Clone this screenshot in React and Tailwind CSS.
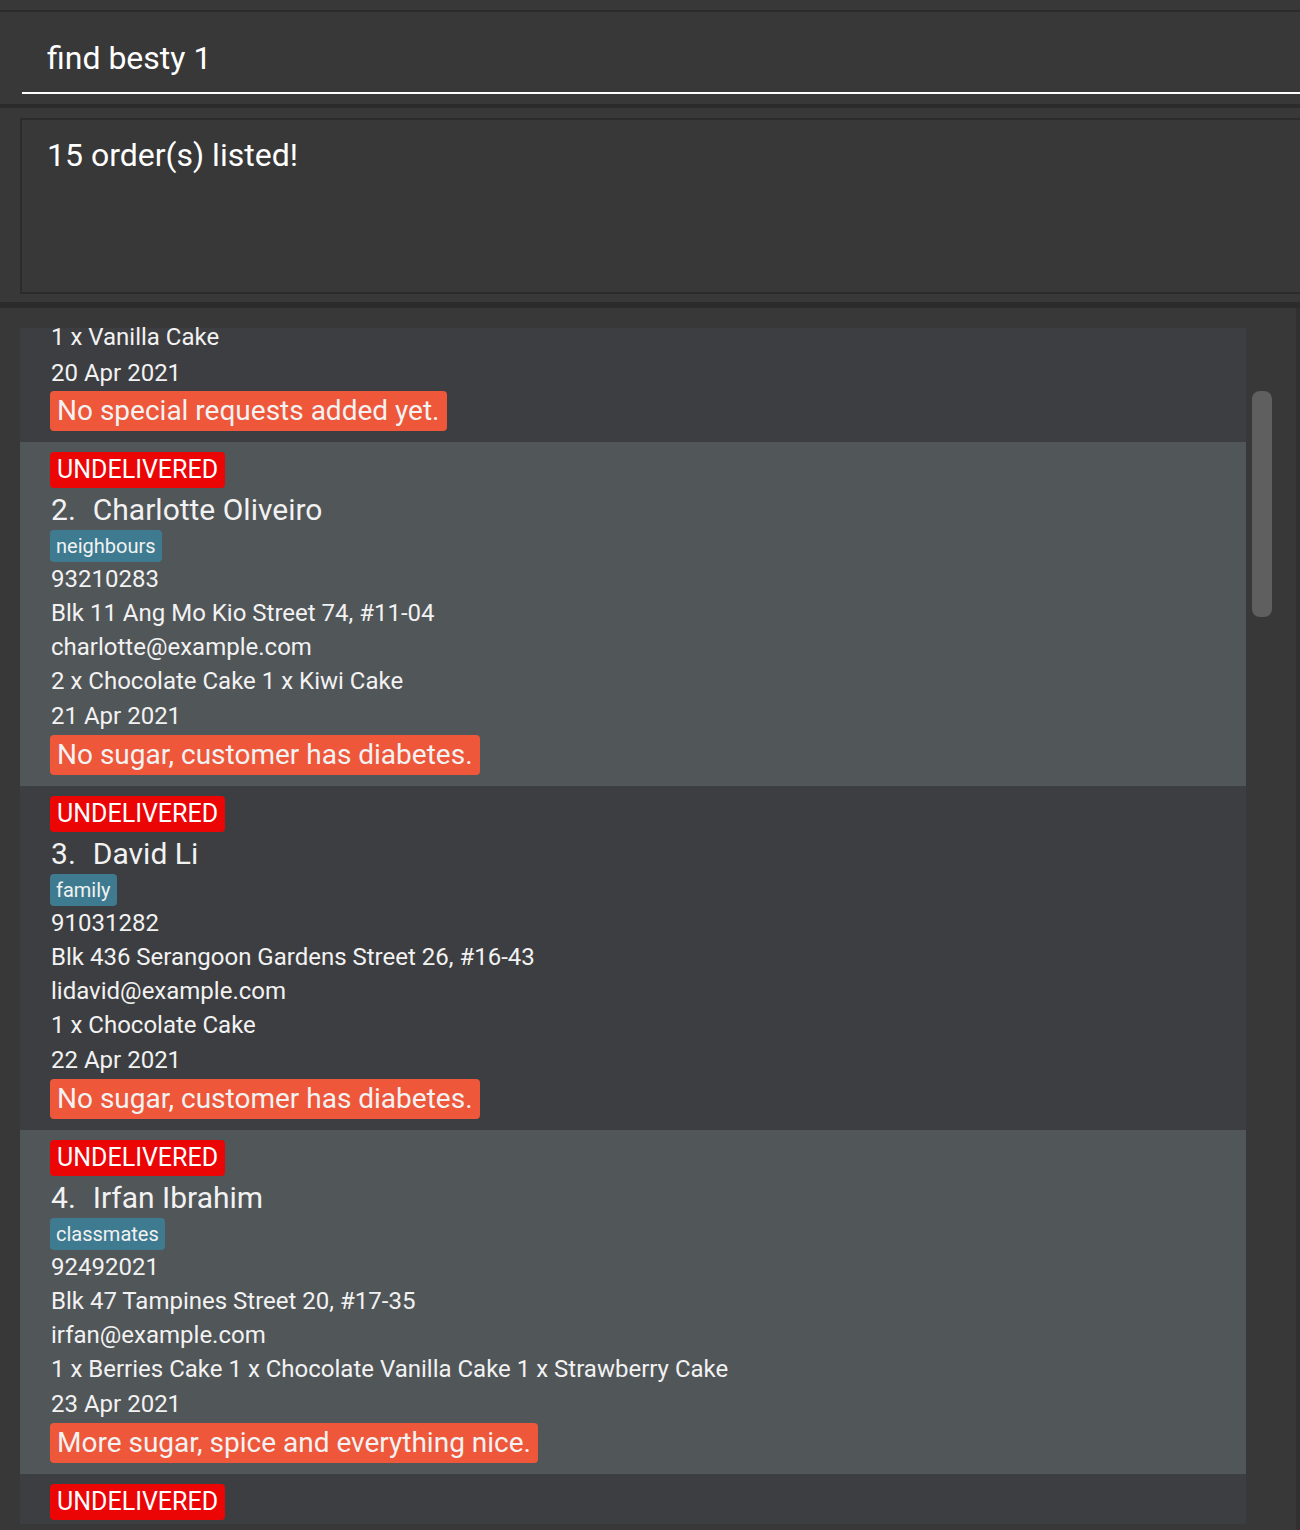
const orders = [
  {
    idx: 2,
    name: 'Charlotte Oliveiro',
    tag: 'neighbours',
    phone: '93210283',
    address: 'Blk 11 Ang Mo Kio Street 74, #11-04',
    email: 'charlotte@example.com',
    items: '2 x Chocolate Cake 1 x Kiwi Cake',
    date: '21 Apr 2021',
    request: 'No sugar, customer has diabetes.',
  },
  {
    idx: 3,
    name: 'David Li',
    tag: 'family',
    phone: '91031282',
    address: 'Blk 436 Serangoon Gardens Street 26, #16-43',
    email: 'lidavid@example.com',
    items: '1 x Chocolate Cake',
    date: '22 Apr 2021',
    request: 'No sugar, customer has diabetes.',
  },
  {
    idx: 4,
    name: 'Irfan Ibrahim',
    tag: 'classmates',
    phone: '92492021',
    address: 'Blk 47 Tampines Street 20, #17-35',
    email: 'irfan@example.com',
    items: '1 x Berries Cake 1 x Chocolate Vanilla Cake 1 x Strawberry Cake',
    date: '23 Apr 2021',
    request: 'More sugar, spice and everything nice.',
  },
];

const Status = () => (
  <span className="h-[36px] px-[7px] rounded-[4px] bg-[#ec0505] text-[25px] leading-[36px] text-white">UNDELIVERED</span>
);

const Request = ({ children }) => (
  <span className="h-[40px] px-[7px] rounded-[4px] bg-[#ee573a] text-[28px] leading-[40px]">{children}</span>
);

function OrderCard({ order, shade }) {
  return (
    <div className={`${shade ? 'bg-[#515659]' : 'bg-[#3d3e41]'} h-[344px] shrink-0 pl-[30px] pt-[10px] pb-[11px] flex flex-col items-start`}>
      <Status />

      {/* name */}
      <div className="h-[40px] pt-[3px] flex items-center text-[30px] leading-[40px]">
        <span className="ml-[1px]">{order.idx}.</span>
        <span className="ml-[17px]">{order.name}</span>
      </div>

      <span className="mt-[2px] h-[32px] px-[6px] rounded-[4px] bg-[#3e7b91] text-[20px] leading-[32px]">{order.tag}</span>

      <div className="text-[24px] leading-[34px] ml-[1px]">
        <p>{order.phone}</p>
        <p>{order.address}</p>
        <p>{order.email}</p>
        <p>{order.items}</p>
        <p className="leading-[36px]">{order.date}</p>
      </div>

      <div className="mt-[1px] flex">
        <Request>{order.request}</Request>
      </div>
    </div>
  );
}

export default function App() {
  return (
    <div className="w-[1300px] h-[1530px] bg-[#383838] flex flex-col overflow-hidden text-[#f2f2f2] font-['Roboto',sans-serif]">
      <div className="h-[10px] shrink-0" />
      <div className="h-[2px] shrink-0 bg-[#2b2b2b]" />

      {/* command box */}
      <div className="h-[92px] shrink-0 pl-[22px] flex flex-col">
        <div className="h-[80px] pl-[25px] pt-[26px] text-[32px] leading-[40px] text-white">find besty 1</div>
        <div className="h-[2px] bg-white" />
      </div>
      <div className="h-[4px] shrink-0 bg-[#2b2b2b]" />

      {/* result display */}
      <div className="pt-[10px] pl-[20px] shrink-0">
        <div className="h-[176px] border-2 border-r-0 border-[#2b2b2b] pl-[25px] pt-[15px] text-[32px] leading-[40px] text-white">
          15 order(s) listed!
        </div>
      </div>
      <div className="h-[8px] shrink-0" />
      <div className="h-[6px] shrink-0 bg-[#2b2b2b]" />

      {/* order list */}
      <div className="flex-1 flex pt-[20px] pl-[20px] pb-[6px] border-r-4 border-[#303030]">
        <div className="w-[1226px] flex flex-col">
          {/* first card, scrolled partly out of view */}
          <div className="bg-[#3d3e41] h-[114px] shrink-0 pl-[31px] flex flex-col items-start">
            <p className="text-[24px] leading-[18px]">1 x Vanilla Cake</p>
            <p className="text-[24px] leading-[36px] mt-[9px]">20 Apr 2021</p>
            <div className="-ml-[1px] flex">
              <Request>No special requests added yet.</Request>
            </div>
          </div>

          {orders.map((o, i) => (
            <OrderCard key={o.idx} order={o} shade={i % 2 === 0} />
          ))}

          {/* last card, cut off at the bottom */}
          <div className="bg-[#3d3e41] flex-1 pl-[30px] pt-[10px] flex flex-col items-start">
            <Status />
          </div>
        </div>
        <div className="flex-1 pl-[6px] pt-[63px]">
          <div className="w-[20px] h-[226px] rounded-[8px] bg-[#5f5f5f]" />
        </div>
      </div>
    </div>
  );
}
